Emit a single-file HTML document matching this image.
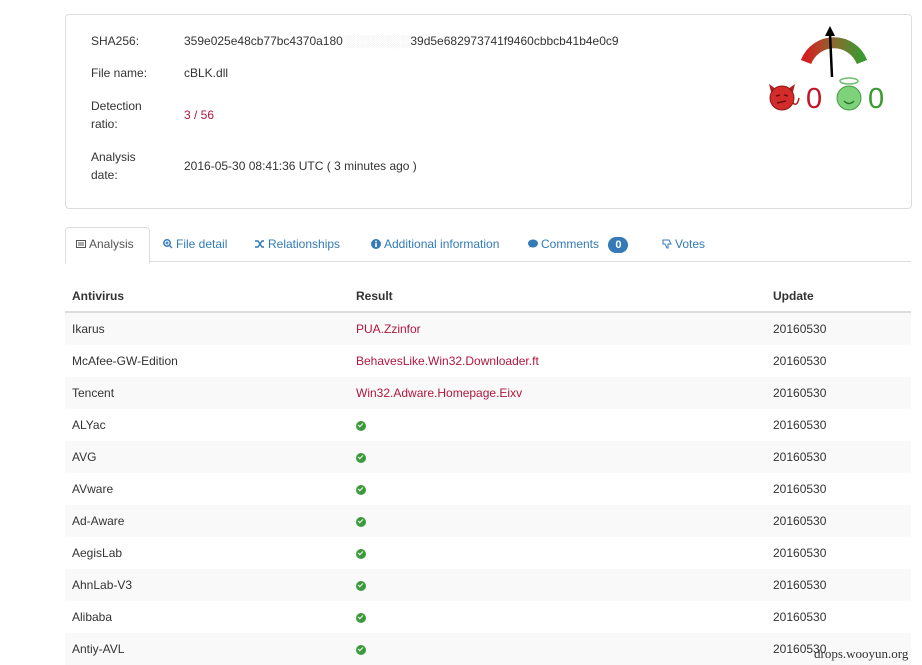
<!DOCTYPE html>
<html><head><meta charset="utf-8"><style>
body{margin:0;background:#fff;font-family:"Liberation Sans",sans-serif;font-size:12px;color:#333;width:922px;height:665px;overflow:hidden;position:relative}
.panel{position:absolute;left:65px;top:14px;width:845px;height:193px;border:1px solid #ddd;border-radius:4px}
.lbl{position:absolute;left:25px;line-height:18px}
.val{position:absolute;left:118px;line-height:18px}
.tabs{position:absolute;left:65px;top:261px;width:846px;border-top:1px solid #ddd}
.tab{position:absolute;top:237px;color:#337ab7;font-size:12px;line-height:14px;white-space:nowrap}
.ic{display:inline-block;width:10px;height:10px;vertical-align:-1px;margin-right:3px}
.act{position:absolute;left:65px;top:227px;width:83px;height:35px;border:1px solid #ddd;border-bottom:1px solid #fff;border-radius:4px 4px 0 0;background:#fff}
table{position:absolute;left:65px;top:280px;width:846px;border-collapse:collapse}
td,th{height:32px;padding:0 7px;text-align:left;font-size:12px}
th{font-weight:bold;border-bottom:2px solid #ddd;height:31px}
tr:nth-child(even) td{background:#f9f9f9}
.r{color:#b0173e}
.ok{display:inline-block;width:10px;height:10px;border-radius:50%;background:#3c9a3c;position:relative;vertical-align:middle}
.ok:after{content:"";position:absolute;left:3px;top:1.5px;width:2px;height:4px;border:solid #fff;border-width:0 1.5px 1.5px 0;transform:rotate(45deg)}
</style></head><body>
<div class="panel">
<div class="lbl" style="top:17px">SHA256:</div><div class="val" style="top:17px">359e025e48cb77bc4370a180<span style="color:#ddd;letter-spacing:-1px">░░░░░░░░░</span>39d5e682973741f9460cbbcb41b4e0c9</div>
<div class="lbl" style="top:49px">File name:</div><div class="val" style="top:49px">cBLK.dll</div>
<div class="lbl" style="top:82px">Detection<br>ratio:</div><div class="val r" style="top:91px">3 / 56</div>
<div class="lbl" style="top:133px">Analysis<br>date:</div><div class="val" style="top:142px">2016-05-30 08:41:36 UTC ( 3 minutes ago )</div>
</div>
<svg style="position:absolute;left:760px;top:20px" width="130" height="95" viewBox="0 0 130 95">
<defs><linearGradient id="g" x1="0" x2="1"><stop offset="0" stop-color="#d42020"/><stop offset="0.5" stop-color="#8a6a30"/><stop offset="1" stop-color="#3a9a30"/></linearGradient></defs>
<path d="M46 42 A30 30 0 0 1 102 42" fill="none" stroke="url(#g)" stroke-width="11"/>
<line x1="72" y1="57" x2="70" y2="14" stroke="#000" stroke-width="2.5"/><path d="M70 6 L65 16 L75 16Z" fill="#000"/>
<path d="M11 72 L9 64 L16 69 M33 72 L35 64 L28 69" fill="#b02020"/>
<path d="M32 82 Q37 88 39 78" fill="none" stroke="#b02020" stroke-width="1.5"/>
<circle cx="22" cy="78" r="12" fill="#d42b2b" stroke="#8a1a1a"/>
<path d="M16 76 L20 75 M24 75 L28 76 M17 83 L26 81" stroke="#6a1010" stroke-width="1.5"/>
<text x="46" y="88" font-size="29" fill="#c0152a" font-family="Liberation Sans">0</text>
<ellipse cx="89" cy="61" rx="9" ry="3" fill="none" stroke="#6cc070" stroke-width="1.5"/>
<circle cx="89" cy="78" r="12" fill="#7dd27a" stroke="#4a9a48"/><path d="M84 81 Q89 86 94 81" fill="none" stroke="#2a7a2a" stroke-width="1.5"/>
<text x="108" y="88" font-size="29" fill="#3a9a30" font-family="Liberation Sans">0</text>
</svg>
<div class="tabs"></div>
<div class="act"></div>
<div class="tab" style="left:76px;color:#555"><svg class="ic" viewBox="0 0 10 10"><rect x="0.5" y="1.5" width="9" height="7" fill="none" stroke="#555"/><path d="M2 4h6M2 6h6" stroke="#555"/></svg>Analysis</div>
<div class="tab" style="left:163px"><svg class="ic" viewBox="0 0 10 10"><circle cx="4" cy="4" r="3.2" fill="none" stroke="#337ab7" stroke-width="1.5"/><path d="M6 6l3 3M2.5 4h3M4 2.5v3" stroke="#337ab7" stroke-width="1.3"/></svg>File detail</div>
<div class="tab" style="left:255px"><svg class="ic" viewBox="0 0 10 10"><path d="M0 2h3l4 6h2M0 8h3l4-6h2" fill="none" stroke="#337ab7" stroke-width="1.4"/></svg>Relationships</div>
<div class="tab" style="left:371px"><svg class="ic" viewBox="0 0 10 10"><circle cx="5" cy="5" r="5" fill="#337ab7"/><rect x="4.2" y="4" width="1.6" height="4" fill="#fff"/><circle cx="5" cy="2.5" r="0.9" fill="#fff"/></svg>Additional information</div>
<div class="tab" style="left:528px"><svg class="ic" viewBox="0 0 10 10"><ellipse cx="5" cy="4.5" rx="5" ry="4" fill="#337ab7"/><path d="M1 9l2-3h2z" fill="#337ab7"/></svg>Comments <span style="display:inline-block;background:#337ab7;color:#fff;border-radius:9px;padding:1px 7px;font-weight:bold;font-size:11px;margin-left:6px">0</span></div>
<div class="tab" style="left:662px"><svg class="ic" viewBox="0 0 10 10"><path d="M1 1h6l2 4-3 0 0 4-1 0-2-4H1z" fill="none" stroke="#337ab7"/></svg>Votes</div>
<table>
<tr><th style="width:270px">Antivirus</th><th style="width:403px">Result</th><th>Update</th></tr>
<tr><td>Ikarus</td><td class="r">PUA.Zzinfor</td><td>20160530</td></tr>
<tr><td>McAfee-GW-Edition</td><td class="r">BehavesLike.Win32.Downloader.ft</td><td>20160530</td></tr>
<tr><td>Tencent</td><td class="r">Win32.Adware.Homepage.Eixv</td><td>20160530</td></tr>
<tr><td>ALYac</td><td><span class="ok"></span></td><td>20160530</td></tr>
<tr><td>AVG</td><td><span class="ok"></span></td><td>20160530</td></tr>
<tr><td>AVware</td><td><span class="ok"></span></td><td>20160530</td></tr>
<tr><td>Ad-Aware</td><td><span class="ok"></span></td><td>20160530</td></tr>
<tr><td>AegisLab</td><td><span class="ok"></span></td><td>20160530</td></tr>
<tr><td>AhnLab-V3</td><td><span class="ok"></span></td><td>20160530</td></tr>
<tr><td>Alibaba</td><td><span class="ok"></span></td><td>20160530</td></tr>
<tr><td>Antiy-AVL</td><td><span class="ok"></span></td><td>20160530</td></tr>
</table>
<div style="position:absolute;left:814px;top:646px;font-family:'Liberation Serif',serif;font-size:13px;color:#333">drops.wooyun.org</div>
</body></html>
